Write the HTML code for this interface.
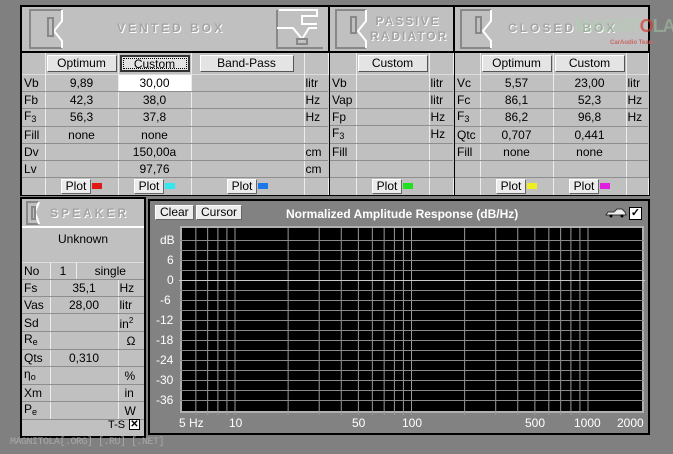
<!DOCTYPE html>
<html><head><meta charset="utf-8">
<style>
*{margin:0;padding:0;box-sizing:border-box}
body{width:673px;height:454px;background:#808080;font-family:"Liberation Sans",Arial,sans-serif;font-size:12px;color:#000;position:relative;overflow:hidden}
.abs{position:absolute}
.panel{position:absolute;background:#c0c0c0;border:2px solid #000}
.hdr{position:absolute;color:#a4a4a4;font-weight:bold;letter-spacing:3px;font-size:12px;text-shadow:1px 1px 0 #fff}
table{position:absolute;border-collapse:collapse;table-layout:fixed;background:#c0c0c0}
td{border-right:1px solid #ececec;border-bottom:1px solid #8e8e8e;border-top:1px solid #dcdcdc;height:17px;text-align:center;padding:0;white-space:nowrap;line-height:14px}
td.l{text-align:left;padding-left:2px}
td.u{text-align:left;padding-left:1px;border-right:none}
td.nb{border-bottom:none;border-top:none}
.btn{display:inline-block;background:#e4e4e4;border:1px solid;border-color:#fff #555 #555 #fff;height:17px;line-height:15px;text-align:center;font-size:12px}
.pbtn{display:inline-block;background:#ececec;border:1px solid;border-color:#fff #666 #666 #fff;height:15px;line-height:13px;padding:0 4px;font-size:12px;vertical-align:middle}
.sw{display:inline-block;width:10px;height:6px;vertical-align:middle;margin-left:1px}
sub{font-size:9px;vertical-align:-2px}
.ax{position:absolute;color:#fff;font-size:12px}
</style></head><body>

<div class="panel" style="left:20px;top:5px;width:630px;height:191px"></div>
<div class="abs" style="left:328px;top:6px;width:2px;height:189px;background:#000"></div>
<div class="abs" style="left:453px;top:6px;width:2px;height:189px;background:#000"></div>
<div class="abs" style="left:22px;top:51px;width:626px;height:2px;background:#000"></div>

<svg class="abs" style="left:22px;top:7px" width="306" height="44">
 <g fill="none" stroke-width="2">
  <polyline points="40,3 8,3 8,41 40,41" stroke="#888"/>
  <polyline points="40,3 40,14 32,24 40,34 40,41" stroke="#fff"/>
  <rect x="26" y="11" width="5" height="18" stroke="#888"/>
  <polyline points="255,3 255,41 301,41" stroke="#888"/>
  <polyline points="257,3 295,3 295,9 280,9 280,17 295,17" stroke="#fff"/>
  <polyline points="255,21 271,21 280,32 287,21 295,21" stroke="#fff"/>
  <rect x="275" y="32" width="10" height="5" stroke="#888"/>
 </g>
</svg>
<div class="hdr" style="left:117px;top:21px">VENTED BOX</div>
<svg class="abs" style="left:332px;top:7px" width="40" height="44"><g fill="none" stroke-width="2"><polyline points="34,3 4,3 4,41 34,41" stroke="#888"/><polyline points="34,3 34,14 26,24 34,34 34,41" stroke="#fff"/><rect x="19" y="10" width="5" height="16" stroke="#888"/></g></svg>
<div class="hdr" style="left:370px;top:14px;line-height:15px;letter-spacing:2px">&nbsp;PASSIVE<br>RADIATOR</div>
<svg class="abs" style="left:457px;top:7px" width="40" height="44"><g fill="none" stroke-width="2"><polyline points="34,3 4,3 4,41 34,41" stroke="#888"/><polyline points="34,3 34,14 26,24 34,34 34,41" stroke="#fff"/><rect x="19" y="10" width="5" height="16" stroke="#888"/></g></svg>
<div class="hdr" style="left:508px;top:21px">CLOSED BOX</div>
<div class="abs" style="left:575px;top:16px;font-size:18px;font-weight:bold;color:rgba(170,210,170,0.45);letter-spacing:-1px">MAGNIT<span style="color:rgba(210,60,50,0.7)">O</span>LA</div>
<div class="abs" style="left:610px;top:40px;font-size:6px;color:#c66;font-weight:bold">CarAudio Team</div>

<table style="left:22px;top:53px;width:306px">
<col style="width:23px"><col style="width:73px"><col style="width:73px"><col style="width:113px"><col style="width:24px">
<tr style="height:21px"><td class="nb"></td><td class="nb"><span class="btn" style="width:70px">Optimum</span></td><td class="nb"><span class="btn" style="width:70px;border:2px solid #333;outline:1px dotted #000;outline-offset:-4px">Custom</span></td><td class="nb" style="text-align:left;padding-left:8px"><span class="btn" style="width:94px">Band-Pass</span></td><td class="nb"></td></tr>
<tr><td class="l">Vb</td><td>9,89</td><td style="background:#fff">30,00</td><td></td><td class="u">litr</td></tr>
<tr><td class="l">Fb</td><td>42,3</td><td>38,0</td><td></td><td class="u">Hz</td></tr>
<tr><td class="l">F<sub>3</sub></td><td>56,3</td><td>37,8</td><td></td><td class="u">Hz</td></tr>
<tr><td class="l">Fill</td><td>none</td><td>none</td><td></td><td class="u"></td></tr>
<tr><td class="l">Dv</td><td></td><td>150,00a</td><td></td><td class="u">cm</td></tr>
<tr><td class="l">Lv</td><td></td><td>97,76</td><td></td><td class="u">cm</td></tr>
<tr style="height:18px"><td class="nb"></td><td class="nb"><span class="pbtn">Plot</span><span class="sw" style="background:#e01818"></span></td><td class="nb"><span class="pbtn">Plot</span><span class="sw" style="background:#30e8f0"></span></td><td class="nb"><span class="pbtn">Plot</span><span class="sw" style="background:#1c78e8"></span></td><td class="nb"></td></tr>
</table>

<table style="left:330px;top:53px;width:123px">
<col style="width:26px"><col style="width:73px"><col style="width:24px">
<tr style="height:21px"><td class="nb"></td><td class="nb"><span class="btn" style="width:70px">Custom</span></td><td class="nb"></td></tr>
<tr><td class="l">Vb</td><td></td><td class="u">litr</td></tr>
<tr><td class="l">Vap</td><td></td><td class="u">litr</td></tr>
<tr><td class="l">Fp</td><td></td><td class="u">Hz</td></tr>
<tr><td class="l">F<sub>3</sub></td><td></td><td class="u">Hz</td></tr>
<tr><td class="l">Fill</td><td></td><td class="u"></td></tr>
<tr><td class="l"></td><td></td><td class="u"></td></tr>
<tr style="height:18px"><td class="nb"></td><td class="nb"><span class="pbtn">Plot</span><span class="sw" style="background:#20e020"></span></td><td class="nb"></td></tr>
</table>

<table style="left:455px;top:53px;width:193px">
<col style="width:25px"><col style="width:73px"><col style="width:73px"><col style="width:22px">
<tr style="height:21px"><td class="nb"></td><td class="nb"><span class="btn" style="width:70px">Optimum</span></td><td class="nb"><span class="btn" style="width:70px">Custom</span></td><td class="nb"></td></tr>
<tr><td class="l">Vc</td><td>5,57</td><td>23,00</td><td class="u">litr</td></tr>
<tr><td class="l">Fc</td><td>86,1</td><td>52,3</td><td class="u">Hz</td></tr>
<tr><td class="l">F<sub>3</sub></td><td>86,2</td><td>96,8</td><td class="u">Hz</td></tr>
<tr><td class="l">Qtc</td><td>0,707</td><td>0,441</td><td class="u"></td></tr>
<tr><td class="l">Fill</td><td>none</td><td>none</td><td class="u"></td></tr>
<tr><td class="l"></td><td></td><td></td><td class="u"></td></tr>
<tr style="height:18px"><td class="nb"></td><td class="nb"><span class="pbtn">Plot</span><span class="sw" style="background:#f0f020"></span></td><td class="nb"><span class="pbtn">Plot</span><span class="sw" style="background:#e020e0"></span></td><td class="nb"></td></tr>
</table>

<div class="panel" style="left:20px;top:197px;width:126px;height:241px"></div>
<div class="abs" style="left:22px;top:226px;width:122px;height:2px;background:#fff"></div>
<svg class="abs" style="left:24px;top:200px" width="20" height="26"><g fill="none" stroke-width="2"><polyline points="15,2 3,2 3,24 15,24" stroke="#888"/><polyline points="15,2 11,12 15,24" stroke="#fff"/><rect x="8" y="7" width="3" height="12" stroke="#888"/></g></svg>
<div class="hdr" style="left:50px;top:206px">SPEAKER</div>
<div class="abs" style="left:22px;top:232px;width:122px;text-align:center">Unknown</div>
<table style="left:22px;top:262px;width:122px">
<col style="width:28px"><col style="width:26px"><col style="width:42px"><col style="width:26px">
<tr><td class="l">No</td><td>1</td><td colspan="2" style="border-right:none">single</td></tr>
<tr><td class="l">Fs</td><td colspan="2">35,1</td><td class="u">Hz</td></tr>
<tr><td class="l">Vas</td><td colspan="2">28,00</td><td class="u">litr</td></tr>
<tr><td class="l">Sd</td><td colspan="2"></td><td class="u">in<sup style="font-size:8px">2</sup></td></tr>
<tr><td class="l">R<sub>e</sub></td><td colspan="2"></td><td class="u" style="padding-left:8px">Ω</td></tr>
<tr><td class="l">Qts</td><td colspan="2">0,310</td><td class="u"></td></tr>
<tr><td class="l">η<sub>o</sub></td><td colspan="2"></td><td class="u" style="padding-left:6px">%</td></tr>
<tr><td class="l">Xm</td><td colspan="2"></td><td class="u" style="padding-left:6px">in</td></tr>
<tr><td class="l">P<sub>e</sub></td><td colspan="2"></td><td class="u" style="padding-left:6px">W</td></tr>
</table>
<div class="abs" style="left:108px;top:419px;font-size:11px">T-S</div>
<div class="abs" style="left:129px;top:419px;width:11px;height:11px;background:#fff;border:1px solid #000;font-size:10px;line-height:9px;text-align:center;font-weight:bold">✕</div>

<div class="abs" style="left:148px;top:199px;width:502px;height:236px;border:2px solid #000;background:#828282"></div>
<span class="pbtn abs" style="left:155px;top:205px;height:15px">Clear</span>
<span class="pbtn abs" style="left:196px;top:205px;height:15px">Cursor</span>
<div class="abs" style="left:286px;top:207px;color:#fff;font-weight:bold;font-size:12px">Normalized Amplitude Response (dB/Hz)</div>
<svg class="abs" style="left:605px;top:208px" width="22" height="10"><path d="M1,7 L3,4 L9,4 L12,1 L17,1 L20,4 L21,7 Z" fill="#eee" stroke="#333" stroke-width="1"/><circle cx="6" cy="8" r="1.5" fill="#000"/><circle cx="17" cy="8" r="1.5" fill="#000"/></svg>
<div class="abs" style="left:629px;top:207px;width:13px;height:13px;background:#fff;border:1px solid #000;font-size:11px;line-height:11px;text-align:center;font-weight:bold">✓</div>

<svg class="abs" id="g" style="left:176px;top:226px" width="470" height="190"></svg>
<div class="ax" style="left:160px;top:233px">dB</div>
<div class="ax" style="left:167px;top:253px">6</div>
<div class="ax" style="left:167px;top:273px">0</div>
<div class="ax" style="left:160px;top:293px">-6</div>
<div class="ax" style="left:156px;top:313px">-12</div>
<div class="ax" style="left:156px;top:333px">-18</div>
<div class="ax" style="left:156px;top:353px">-24</div>
<div class="ax" style="left:156px;top:373px">-30</div>
<div class="ax" style="left:156px;top:393px">-36</div>
<div class="ax" style="left:179px;top:416px">5 Hz</div>
<div class="ax" style="left:229px;top:416px">10</div>
<div class="ax" style="left:352px;top:416px">50</div>
<div class="ax" style="left:402px;top:416px">100</div>
<div class="ax" style="left:525px;top:416px">500</div>
<div class="ax" style="left:574px;top:416px">1000</div>
<div class="ax" style="left:617px;top:416px">2000</div>

<div class="abs" style="left:10px;top:437px;font-family:'Liberation Mono',monospace;font-size:10px;color:#a8a8a8;letter-spacing:-0.5px">MAGNITOLA[.ORG] [.RU] [.NET]</div>

<script>
var s='',ox=176,oy=226;
var X0=182,Y0=228,X1=642,Y1=411;
s+='<rect x="'+(X0-ox-1)+'" y="'+(Y0-oy-1)+'" width="'+(X1-X0+2)+'" height="'+(Y1-Y0+2)+'" fill="#000" stroke="#b0b0b0" stroke-width="2"/>';
var fs=[6,7,8,9,10,20,30,40,50,60,70,80,90,100,200,300,400,500,600,700,800,900,1000];
fs.forEach(function(f){var x=235+176.5*Math.log10(f/10)-ox;s+='<line x1="'+x+'" y1="'+(Y0-oy)+'" x2="'+x+'" y2="'+(Y1-oy+4)+'" stroke="#9a9a9a"/>';});
for(var y=240;y<=400;y+=10){var yy=y-oy+0.5;s+='<line x1="'+(X0-ox-3)+'" y1="'+yy+'" x2="'+(X1-ox+3)+'" y2="'+yy+'" stroke="'+(y==280?'#c8c8c8':'#8a8a8a')+'"/>';}
document.getElementById('g').innerHTML=s;
</script>
</body></html>
